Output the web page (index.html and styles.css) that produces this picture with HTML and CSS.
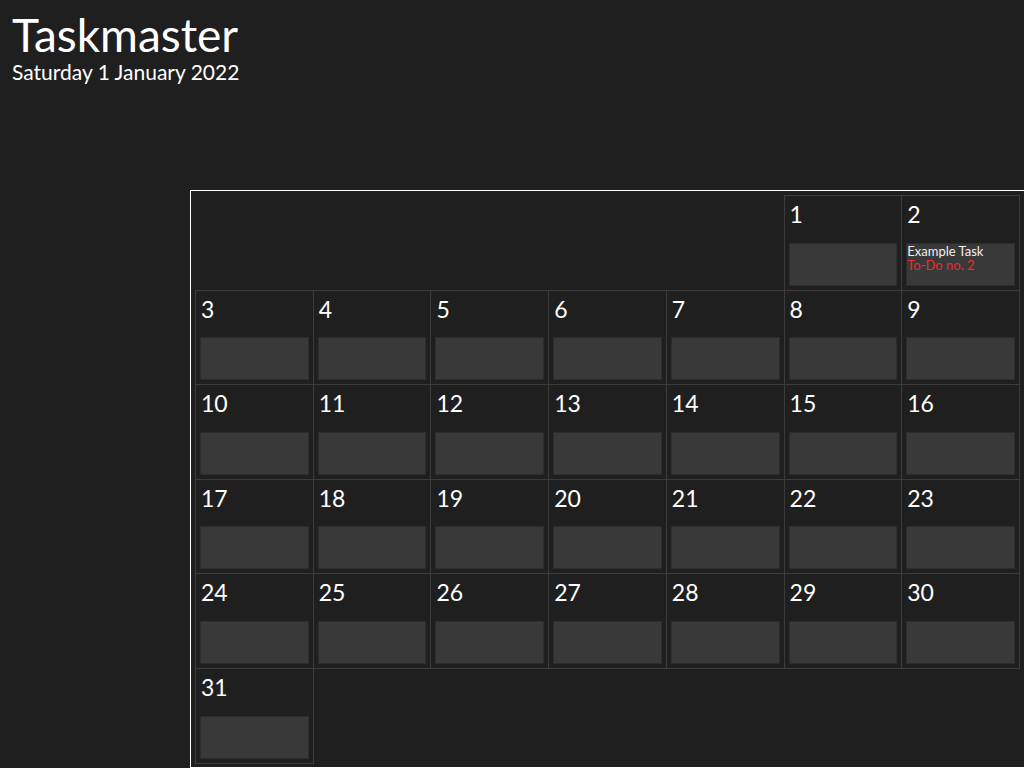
FILE: index.html
```html
<!DOCTYPE html>
<html lang="en">
<head>
<meta charset="utf-8">
<title>Taskmaster</title>
<link rel="stylesheet" href="styles.css">
</head>
<body>
<header class="header">
  <h1 class="title">Taskmaster</h1>
  <p class="date">Saturday 1 January 2022</p>
</header>
<main class="calendar">
  <div class="grid">
    <div class="blank"></div><div class="blank"></div><div class="blank"></div><div class="blank"></div><div class="blank"></div>
    <div class="day"><span class="num">1</span><div class="tasks"></div></div>
    <div class="day"><span class="num">2</span><div class="tasks"><div class="task">Example Task</div><div class="todo">To-Do no. 2</div></div></div>
    <div class="day"><span class="num">3</span><div class="tasks"></div></div>
    <div class="day"><span class="num">4</span><div class="tasks"></div></div>
    <div class="day"><span class="num">5</span><div class="tasks"></div></div>
    <div class="day"><span class="num">6</span><div class="tasks"></div></div>
    <div class="day"><span class="num">7</span><div class="tasks"></div></div>
    <div class="day"><span class="num">8</span><div class="tasks"></div></div>
    <div class="day"><span class="num">9</span><div class="tasks"></div></div>
    <div class="day"><span class="num">10</span><div class="tasks"></div></div>
    <div class="day"><span class="num">11</span><div class="tasks"></div></div>
    <div class="day"><span class="num">12</span><div class="tasks"></div></div>
    <div class="day"><span class="num">13</span><div class="tasks"></div></div>
    <div class="day"><span class="num">14</span><div class="tasks"></div></div>
    <div class="day"><span class="num">15</span><div class="tasks"></div></div>
    <div class="day"><span class="num">16</span><div class="tasks"></div></div>
    <div class="day"><span class="num">17</span><div class="tasks"></div></div>
    <div class="day"><span class="num">18</span><div class="tasks"></div></div>
    <div class="day"><span class="num">19</span><div class="tasks"></div></div>
    <div class="day"><span class="num">20</span><div class="tasks"></div></div>
    <div class="day"><span class="num">21</span><div class="tasks"></div></div>
    <div class="day"><span class="num">22</span><div class="tasks"></div></div>
    <div class="day"><span class="num">23</span><div class="tasks"></div></div>
    <div class="day"><span class="num">24</span><div class="tasks"></div></div>
    <div class="day"><span class="num">25</span><div class="tasks"></div></div>
    <div class="day"><span class="num">26</span><div class="tasks"></div></div>
    <div class="day"><span class="num">27</span><div class="tasks"></div></div>
    <div class="day"><span class="num">28</span><div class="tasks"></div></div>
    <div class="day"><span class="num">29</span><div class="tasks"></div></div>
    <div class="day"><span class="num">30</span><div class="tasks"></div></div>
    <div class="day"><span class="num">31</span><div class="tasks"></div></div>
  </div>
</main>
</body>
</html>
```

FILE: styles.css
```css
html, body {
  margin: 0;
  padding: 0;
  background: #1f1f1f;
  color: #ffffff;
  font-family: Lato, "Open Sans", sans-serif;
  overflow: hidden;
  height: 768px;
}

.header {
  padding: 10px 0 0 12px;
  height: 80px;
}

.title {
  margin: 0;
  font-size: 46px;
  font-weight: 400;
  line-height: 50px;
}

.date {
  margin: 0;
  font-size: 21px;
  line-height: 24px;
}

.calendar {
  margin: 100px 0 0 190px;
  width: 840px;
  border: 1px solid #ffffff;
  padding: 4px;
}

.grid {
  display: grid;
  width: 824px;
  grid-template-columns: repeat(7, 1fr);
  grid-auto-rows: 94.6px;
}

.day {
  border: 1px solid #3b3b3b;
  margin: 0 -1px -1px 0;
  padding: 4px;
  display: flex;
  flex-direction: column;
}

.num {
  font-size: 23px;
  line-height: 28px;
  padding: 0 0 0 1px;
}

.tasks {
  margin-top: auto;
  height: 43px;
  background: #393939;
  border: 1px solid #2d2d2d;
  box-sizing: border-box;
  font-size: 13px;
  line-height: 14px;
  padding: 0;
}

.task {
  color: #f0f0f0;
}

.todo {
  color: #ee2b2b;
}
```
